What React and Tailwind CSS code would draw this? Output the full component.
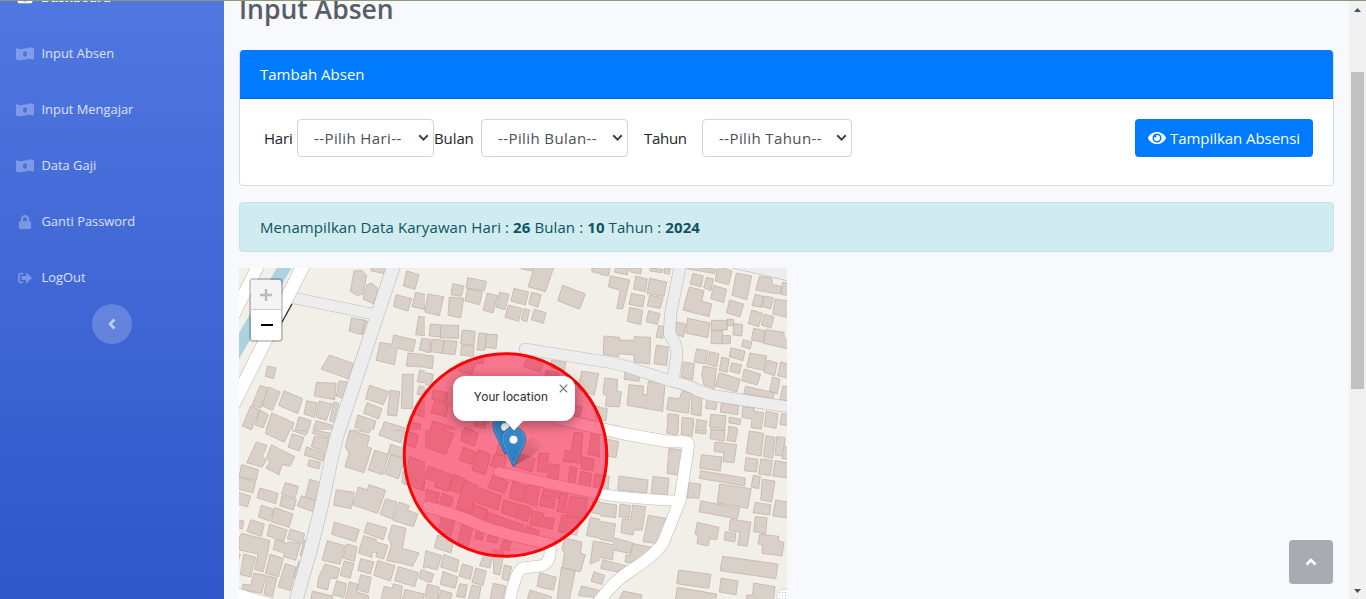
import React from "react";
import { FaLock, FaSignOutAlt, FaEye, FaTachometerAlt } from "react-icons/fa";

function MoneyWave({ className }) {
  return (
    <svg className={className} viewBox="0 0 18 18" fill="currentColor">
      <path
        fillRule="evenodd"
        d="M.8 3.300C3.500 4.600 6.200 4.300 9 3.500C11.800 2.700 14.500 2.200 17.300 3.100Q18 3.400 18 4.100V13.700Q18 14.600 17.200 14.400C14.500 13.400 11.800 13.700 9 14.500C6.200 15.300 3.500 15.700 .7 14.800Q0 14.600 0 13.900V3.900Q0 3 .8 3.300ZM9 6.300C7.800 6.300 7 7.500 7 9S7.800 11.700 9 11.700S11 10.500 11 9S10.200 6.300 9 6.300Z"
      />
    </svg>
  );
}

const navItems = [
  { label: "Input Absen", Icon: MoneyWave, icon: "size-[18px] text-white/30" },
  { label: "Input Mengajar", Icon: MoneyWave, icon: "size-[18px] text-white/30" },
  { label: "Data Gaji", Icon: MoneyWave, icon: "size-[18px] text-white/30" },
  { label: "Ganti Password", Icon: FaLock, icon: "size-[14px] text-white/30" },
  { label: "LogOut", Icon: FaSignOutAlt, icon: "size-[14px] text-white/30" },
];

/* Building footprints, one block per map tile; each tile uses its own 3x units. */
const tiles = [
  {
    x: 0, y: -2, w: 558, h: 492,
    shapes: [
      "345,15 368,13 383,28 372,84 355,89 334,76", "383,57 397,51 416,67 404,114 372,99",
      "398,0 446,0 440,24 395,14", "503,15 540,26 528,70 493,60", "472,86 518,98 507,135 463,121",
      "530,79 565,86 555,130 519,122", "562,86 580,90 575,140 556,134",
      "338,155 379,163 367,206 330,195", "377,164 388,167 379,205 370,205",
      "539,151 566,155 558,209 530,206", "464,207 530,222 522,257 475,247 466,296 411,283 423,229 458,235",
      "548,217 580,222 578,260 541,252", "507,261 580,268 580,305 502,300",
      "272,267 344,293 330,339 246,309", "86,300 111,306 104,338 79,331",
      "232,349 292,352 287,401 226,390", "300,345 325,348 312,397 292,390",
      "490,325 523,325 521,428 487,427", "542,312 580,320 580,355 535,347",
      "540,360 570,366 562,390 534,385", "392,358 449,377 433,416 379,398",
      "453,373 482,377 473,450 445,447", "384,410 429,428 418,459 374,442",
      "64,358 90,367 65,427 39,417", "88,363 124,378 100,433 70,420",
      "135,374 191,398 176,443 119,418", "203,404 235,411 226,454 195,444",
      "241,405 279,414 262,463 231,453", "284,408 300,412 283,468 272,465",
      "35,420 62,432 37,491 10,480", "62,432 88,446 72,486 49,477",
      "98,441 165,470 149,520 78,500", "180,452 217,464 203,507 168,493",
      "231,464 281,478 277,510 220,498", "357,447 411,465 400,501 347,484",
      "436,467 497,485 488,525 421,508", "342,491 390,500 385,520 335,510",
      "548,402 570,410 560,455 527,444", "520,470 545,475 540,510 510,500",
    ],
  },
  {
    x: 186, y: -2, w: 525, h: 492,
    shapes: [
      "330,0 386,6 361,77 309,62", "290,0 325,6 322,15 288,9", "500,6 558,8 552,28 501,17",
      "559,32 580,36 575,68 552,60", "413,58 481,84 464,130 398,104",
      "128,35 184,46 178,74 123,66", "83,53 117,60 109,91 78,86",
      "8,84 56,92 43,149 1,139", "73,93 116,97 107,155 69,148", "128,68 172,77 164,116 120,105",
      "187,81 218,89 204,141 174,133", "224,79 252,85 240,131 214,124",
      "267,67 311,78 301,117 258,105", "320,79 349,86 339,123 311,114",
      "250,117 291,128 281,166 240,154", "297,128 314,132 305,167 289,161", "328,130 363,140 355,172 319,161",
      "16,174 48,177 47,213 12,209", "47,177 101,178 101,217 46,216",
      "-10,218 18,220 15,260 -15,255", "22,220 58,223 52,262 16,257", "58,223 96,226 90,266 52,262",
      "112,192 151,196 147,238 107,234", "110,238 147,240 145,272 106,267",
      "162,201 184,202 180,252 156,253", "184,204 217,206 213,248 181,244",
      "-20,266 26,270 22,308 -20,302", "-20,315 25,325 18,360 -25,350",
      "538,210 575,213 573,270 534,267", "380,282 423,290 418,313 378,306",
      "470,315 521,323 508,388 459,370", "541,335 580,340 580,423 540,420 535,380",
      "110,285 153,292 140,325 100,315", "155,275 178,280 174,294 152,290",
      "308,275 355,293 345,318 294,300", "364,313 402,320 395,350 358,340",
      "24,372 69,380 65,408 20,400", "30,400 70,413 63,453 18,440",
      "25,465 88,485 70,530 5,510", "120,483 162,498 155,520 110,510",
      "435,415 471,422 464,452 430,445", "508,420 548,425 545,463 512,458",
      "156,440 188,448 180,487 147,480", "447,497 478,501 475,520 445,517",
    ],
  },
  {
    x: 361, y: -2, w: 570, h: 492,
    shapes: [
      "0,0 30,5 26,30 -4,24", "48,5 86,8 82,27 43,18", "88,4 125,8 122,24 92,18",
      "150,6 188,10 186,20 150,15", "193,6 211,8 208,25 192,22",
      "32,30 89,42 68,129 50,127 61,73 25,62", "107,30 142,39 136,77 101,69",
      "149,37 200,48 192,91 141,82", "94,82 134,90 128,123 87,115", "149,88 189,95 181,127 142,120",
      "89,124 128,133 122,176 82,166", "146,134 180,143 172,175 138,167",
      "176,178 192,182 188,217 168,213", "262,0 348,10 344,23 260,8",
      "279,22 310,30 303,63 270,53", "319,34 340,39 333,74 311,65",
      "354,0 396,15 386,56 345,45", "268,63 312,74 305,105 335,114 327,152 249,132",
      "341,58 380,70 371,110 332,98", "409,21 455,30 441,101 396,88", "389,102 431,114 420,153 379,140",
      "479,30 515,37 517,55 546,62 540,83 510,80 467,72", "548,49 575,53 575,90 543,85",
      "466,84 491,92 486,124 456,119", "493,90 520,95 512,129 486,121", "525,99 570,105 565,155 518,144",
      "455,132 487,142 476,182 445,172", "492,145 522,152 513,186 484,177",
      "263,157 330,171 323,215 257,201", "230,168 257,174 250,213 225,203",
      "334,163 382,163 382,192 334,193", "382,159 401,161 400,179 382,178", "401,172 428,176 425,210 399,207",
      "334,194 368,194 365,234 333,232", "368,208 392,209 391,233 365,233",
      "461,187 495,194 489,229 454,222", "498,191 552,199 553,218 575,225 575,251 490,232",
      "430,221 456,228 450,249 424,241", "12,210 59,214 58,222 103,223 103,212 152,214 149,294 102,288 102,267 57,263 56,272 10,265",
      "169,237 205,243 200,299 162,293", "290,248 324,255 316,294 282,288", "329,257 357,264 350,303 321,294",
      "393,245 435,256 429,284 388,272", "450,261 500,270 490,313 440,302",
      "365,273 388,279 381,319 358,313", "395,290 425,297 418,323 389,315",
      "502,282 532,291 524,329 492,319", "542,288 575,296 570,338 533,329",
      "250,288 283,293 278,341 244,332", "310,300 349,308 343,368 312,357 305,325",
      "358,320 421,340 410,378 346,360", "433,309 482,325 472,357 425,344",
      "517,333 540,339 532,384 509,376", "437,361 522,380 519,398 431,382", "549,359 575,365 575,410 540,400",
      "75,315 119,323 117,346 72,340", "14,336 53,340 51,376 64,378 58,423 16,420 20,391 9,383",
      "87,356 130,360 129,386 141,386 145,345 195,354 188,436 81,418",
      "206,394 238,398 246,376 272,380 265,442 200,431", "276,385 306,389 303,450 273,444",
      "320,402 352,407 347,431 317,427", "364,411 416,419 413,446 361,438",
      "428,422 463,427 462,436 491,440 484,489 453,485 456,460 426,454",
      "498,436 534,443 528,487 493,481", "545,443 575,449 573,482 540,475",
      "204,443 236,447 233,510 201,500", "247,454 281,458 278,515 243,510",
      "290,460 320,466 314,504 286,500", "332,445 378,449 375,487 329,483",
      "388,453 423,460 420,476 386,470", "-20,423 22,427 18,465 -25,455",
      "331,488 376,491 372,520 330,518", "386,480 412,486 410,520 382,515", "448,496 492,500 490,520 446,515",
    ],
  },
  {
    x: 0, y: 162, w: 558, h: 507,
    shapes: [
      "88,-10 153,0 136,37 79,10", "170,0 208,3 200,16 160,2", "160,12 195,22 181,63 147,51",
      "225,0 274,10 269,24 220,10", "226,18 269,27 262,65 217,50",
      "202,51 258,69 252,93 196,75", "210,89 245,97 240,117 206,108",
      "52,36 84,46 70,80 82,90 69,111 23,98", "97,44 167,80 153,109 129,104 120,134 81,115 93,95 82,85",
      "8,104 58,119 51,152 0,140", "0,141 50,156 42,188 -5,177", "0,188 35,198 25,231 -5,222",
      "63,174 117,190 110,221 54,203", "139,158 178,169 168,205 127,192", "129,197 172,209 163,240 122,227",
      "212,148 243,157 230,211 199,201", "187,197 230,212 223,245 175,228",
      "67,225 104,238 92,273 58,261", "107,232 162,252 150,292 97,275",
      "-5,270 14,273 10,297 -8,292", "35,269 76,282 67,319 24,304", "92,282 144,300 134,334 84,317",
      "154,297 197,311 189,340 145,326", "8,310 92,331 86,370 72,426 47,418 57,372 0,360 0,325",
      "110,329 144,340 147,335 184,341 170,391 133,380 136,370 102,358",
      "195,330 207,333 195,380 183,376", "14,372 50,382 35,441 4,434", "94,372 133,386 118,440 79,430",
      "139,401 172,412 154,482 117,470", "180,393 187,395 176,445 163,441",
      "45,429 80,436 68,490 8,478 12,463 35,465", "84,437 113,444 101,500 75,493", "-5,370 4,372 -3,400 -8,398",
      "332,0 392,18 384,50 398,55 375,128 318,110 330,70 319,50",
      "350,-8 395,0 391,9 345,0", "426,-4 497,3 485,39 420,15",
      "407,60 449,74 431,134 388,120", "455,75 498,87 478,147 437,131", "455,43 500,58 490,82 447,70",
      "490,125 510,130 500,166 489,158", "292,179 346,187 337,236 284,226",
      "390,164 440,181 416,250 342,225 358,171 385,180", "440,206 474,216 460,267 423,253",
      "480,216 512,228 505,240 537,252 523,290 462,271",
      "286,276 361,299 350,335 278,313", "385,277 443,294 433,329 375,308",
      "459,285 501,295 490,355 540,369 521,409 484,399 443,392 457,345 448,323",
      "374,317 412,328 411,336 447,346 434,387 411,380 413,367 399,367 399,382 358,369",
      "265,332 317,347 303,403 249,390", "322,342 354,350 346,394 312,384",
      "316,393 345,400 333,445 303,436", "365,386 405,396 394,432 357,421",
      "416,392 468,407 454,453 404,436", "258,402 302,415 294,446 273,444 266,480 234,471 240,439",
      "478,410 539,428 527,470 467,452", "547,419 580,427 575,457 540,445",
      "365,434 397,442 387,489 355,479", "293,452 322,461 315,503 281,494",
      "331,456 356,463 352,485 388,497 390,515 318,515", "220,483 281,498 278,520 215,510",
      "435,469 460,475 463,461 490,469 484,515 426,510", "498,478 556,492 552,520 488,515",
      "503,3 538,14 528,54 500,44", "512,78 574,105 550,182 498,160", "560,147 580,154 575,185 550,178",
      "560,365 580,370 578,420 553,413",
    ],
  },
  {
    x: 186, y: 162, w: 525, h: 507,
    shapes: [
      "0,-12 88,10 62,74 -8,48", "115,-8 160,10 148,49 107,32", "115,50 153,68 142,104 103,90",
      "160,59 197,73 181,134 141,120", "208,72 246,82 236,118 196,107", "220,42 245,52 240,80 214,70",
      "270,67 331,86 320,126 264,108", "342,69 371,70 365,127 336,123",
      "448,7 474,9 469,62 470,100 415,94 422,60 438,64", "500,2 533,5 525,80 489,73",
      "474,81 507,88 503,122 468,116", "374,101 403,105 399,150 367,145",
      "435,109 455,114 449,163 429,158", "468,124 500,131 495,175 461,171", "510,132 550,138 549,180 505,175",
      "10,109 38,118 26,153 -5,145", "43,120 84,136 70,184 28,170", "87,133 120,148 104,190 72,179",
      "120,150 160,168 137,251 94,235", "204,135 250,155 238,189 189,173",
      "5,178 43,190 35,222 -5,210", "53,190 85,204 78,228 43,218", "165,174 229,198 219,240 152,217",
      "263,155 303,168 291,216 252,203", "307,160 344,170 334,229 297,216",
      "355,178 403,189 402,205 352,195", "350,195 390,210 386,235 345,227",
      "407,188 428,193 419,249 395,244", "436,197 488,206 480,268 423,258",
      "236,210 280,224 270,262 229,248", "284,223 318,233 307,275 273,264",
      "146,222 188,240 179,270 140,257", "188,247 244,267 238,296 180,279",
      "320,242 356,250 356,262 389,266 382,297 352,291 315,285",
      "249,269 295,284 290,306 245,296", "305,288 342,302 337,320 295,307",
      "410,255 465,265 455,316 400,305", "50,260 90,270 78,316 38,306", "110,285 143,293 130,348 98,338",
      "155,299 175,304 172,330 150,326", "190,316 218,323 215,340 187,334", "235,330 258,336 252,363 226,357",
      "38,316 85,330 78,369 28,353", "2,362 50,377 37,420 -8,408", "56,373 102,391 95,426 47,411",
      "176,375 202,380 195,414 164,407", "205,358 237,366 225,435 206,431", "238,405 260,410 250,454 231,446",
      "112,401 144,412 136,448 102,438", "152,414 184,423 174,467 141,457",
      "54,424 99,441 90,475 46,463", "-10,420 27,432 18,457 -10,452", "8,462 43,472 37,515 -5,515",
      "48,480 81,490 75,515 38,515", "104,461 127,465 120,503 94,500", "141,465 168,470 160,515 128,515",
      "205,460 242,468 232,515 194,515", "344,428 394,442 385,481 336,469", "315,480 380,500 375,520 305,515",
      "419,324 471,336 467,370 481,374 466,426 412,414 418,370 411,355",
      "409,412 451,422 432,515 395,515", "496,262 570,278 568,335 484,316", "505,333 570,345 565,408 525,390 495,402",
      "507,425 541,438 532,463 498,454", "470,468 527,482 522,503 460,497", "503,213 580,220 580,263 500,248",
    ],
  },
  {
    x: 361, y: 162, w: 570, h: 507,
    shapes: [
      "200,-10 236,0 230,15 200,10", "247,-8 278,0 276,20 243,12", "288,0 320,0 316,12 285,8",
      "333,0 375,2 372,34 330,26", "389,-8 413,0 406,36 380,31",
      "345,36 410,44 402,98 369,95 372,68 342,64", "304,74 366,81 361,123 299,115",
      "448,3 491,10 483,78 438,70", "498,17 525,22 518,85 490,80", "530,20 555,23 550,79 525,75", "551,50 575,52 575,90 546,86",
      "438,83 474,88 469,126 433,122", "482,87 517,91 511,137 476,132", "525,92 575,100 575,145 518,138",
      "302,122 436,144 434,168 298,145", "460,136 481,140 476,176 453,171",
      "487,148 525,153 515,216 482,210", "359,162 454,176 443,235 352,219",
      "303,212 419,236 412,267 297,245", "466,217 512,224 509,255 459,248", "527,210 575,218 575,265 518,258",
      "466,260 501,263 497,312 461,305", "391,268 453,276 442,349 413,345 420,307 387,301",
      "292,277 357,292 350,329 330,326 324,348 291,341 294,318 285,312",
      "376,305 408,310 404,336 372,330", "479,313 536,319 536,333 552,337 546,378 486,370 487,345 474,342",
      "368,379 534,402 527,446 360,422", "236,420 333,433 326,475 230,461",
      "363,444 414,453 408,494 358,486", "232,472 350,492 345,520 225,515",
      "461,459 525,470 520,515 438,515 440,495 458,495",
      "20,27 56,35 48,83 15,77", "207,55 248,60 235,135 201,130", "57,138 144,150 140,189 53,180",
      "159,139 207,145 202,196 154,190", "267,158 302,162 297,205 262,203", "0,134 28,138 24,180 -15,176",
      "-10,216 50,225 47,263 -10,256", "60,222 91,227 87,265 57,260",
      "98,225 137,230 127,300 103,300 99,315 63,308 67,267 92,270",
      "-5,273 47,282 38,335 -10,326", "145,256 198,265 180,342 129,335",
      "45,324 98,339 91,371 40,360 38,390 -10,380 -10,333 40,345",
      "100,341 156,352 125,397 75,397 78,374 90,378",
      "8,389 89,410 77,430 2,416", "-8,430 14,435 6,463 -10,460", "70,483 126,495 120,520 52,515",
    ],
  },
];

const greyRoads = [
  { d: "M156 -6 L98 168 Q92 190 88 212 L82 240 L72 280 L55 340", w: 13 },
  { d: "M57 30.5 L134 46", w: 10.5 },
  { d: "M286 81 L361 93 Q380 95 398 102 L432 113 Q450 117 458 122 L471 127 L556 140", w: 11 },
  { d: "M442 -6 L431.500 46 L430.500 66 Q438 76 438 86 L434 112", w: 11.500 },
  { d: "M474 -12 L556 7", w: 14 },
];

const whiteRoads = [
  { d: "M21 -6 L-6 48", w: 12 },
  { d: "M66 -6 L-6 137", w: 13 },
  { d: "M260 204 Q310 216 356 225 Q380 230 441 233", w: 10 },
  { d: "M320 151 L381 165 L425 173 L447 174 Q450 175 449 180 L441 232 L424 275 Q415 288 391 303 Q374 314 358 336", w: 11.500 },
  { d: "M189 239 Q220 247 245 259 Q265 266 311 276 Q313 296 301 298 L284 300 Q277 301 270 336", w: 11 },
  { d: "M-6 322 L46 338", w: 6 },
];

function Roads({ roads, fill, casing }) {
  return (
    <g fill="none" strokeLinecap="round" strokeLinejoin="round">
      {roads.map((r) => (
        <path key={r.d} d={r.d} stroke={casing} strokeWidth={r.w + 1.2} />
      ))}
      {roads.map((r) => (
        <path key={r.d} d={r.d} stroke={fill} strokeWidth={r.w} />
      ))}
    </g>
  );
}

function Pin({ x, y }) {
  return (
    <g transform={`translate(${x} ${y})`}>
      <path
        d="M12.500 .5C5.800 .5 .5 5.700 .5 12.200C.5 16.500 2.800 20.300 5 24.800L12.500 40.500L20 24.800C22.200 20.300 24.500 16.500 24.500 12.200C24.500 5.700 19.200 .5 12.500 .5Z"
        fill="url(#pinFill)"
        stroke="#2e73a8"
        strokeWidth=".9"
      />
      <path
        d="M12.500 1.700C6.500 1.700 1.700 6.400 1.700 12.200C1.700 16 4.200 20 6.200 24.500L12.500 37.500L18.800 24.500C20.800 20 23.300 16 23.300 12.200C23.300 6.400 18.500 1.700 12.500 1.700Z"
        fill="none"
        stroke="#fff"
        strokeOpacity=".15"
      />
      <circle cx="12.500" cy="13" r="4.400" fill="#fff" stroke="#2e6c97" strokeWidth=".6" />
    </g>
  );
}

function MapView() {
  return (
    <div className="relative h-[331px] w-[548px] overflow-hidden bg-[#f2efe9]">
      <svg width="548" height="331" viewBox="0 0 548 331" className="block">
        <defs>
          <linearGradient id="pinFill" x1="0" y1="0" x2="0" y2="1">
            <stop offset="0" stopColor="#3a8fd0" />
            <stop offset="1" stopColor="#2b78bc" />
          </linearGradient>
          <linearGradient id="shade" x1="0" y1="1" x2="1" y2="0">
            <stop offset="0" stopColor="#000" stopOpacity=".45" />
            <stop offset="1" stopColor="#000" stopOpacity="0" />
          </linearGradient>
          <pattern id="dots" width="3" height="3" patternUnits="userSpaceOnUse">
            <rect width="3" height="3" fill="#fff" />
            <rect width="1" height="1" fill="#c4c4c4" />
          </pattern>
        </defs>
        <path d="M39 -2 L54 -2 L43 16 L0 91 V65 Z" fill="#aad3df" />
        {tiles.map((t) => (
          <svg
            key={`${t.x}-${t.y}`}
            x={t.x}
            y={t.y}
            width={t.w / 3}
            height={t.h / 3}
            viewBox={`0 0 ${t.w} ${t.h}`}
          >
            {t.shapes.map((p) => (
              <polygon key={p} points={p} fill="#d9d0c9" stroke="#c3b5aa" strokeWidth="2.400" />
            ))}
          </svg>
        ))}
        <Roads roads={greyRoads} fill="#ededee" casing="#bcbcbe" />
        <Roads roads={whiteRoads} fill="#ffffff" casing="#c2beb8" />
        <path d="M0 325 L34 335 H0 Z" fill="#fff" />
        <path d="M53 36 L43 54" stroke="#222" strokeWidth="1.200" />
        <circle cx="545" cy="328" r="7" fill="url(#dots)" stroke="#c4c4c4" strokeWidth=".6" />
        <circle cx="266.500" cy="187" r="101.300" fill="#ff0033" fillOpacity=".5" stroke="#f80606" strokeWidth="3" />
        <path d="M275 198 L282 177 Q292 165 302 172 Q305 180 294 187 Z" fill="url(#shade)" opacity=".6" />
        <Pin x={253.500} y={146} />
        <Pin x={262} y={158.700} />
      </svg>

      <div className="absolute left-[10px] top-[10px] flex w-[34px] flex-col rounded border-2 border-black/20 bg-white bg-clip-padding">
        <button className="flex h-[30px] items-center justify-center rounded-t-sm border-b border-[#ccc] bg-[#f4f4f4] text-[#bbb]">
          <svg width="14" height="14" viewBox="0 0 14 14" stroke="currentColor" strokeWidth="2.400">
            <path d="M1 7H13M7 1V13" />
          </svg>
        </button>
        <button className="flex h-[30px] items-center justify-center pl-px text-black">
          <svg width="14" height="14" viewBox="0 0 14 14" stroke="currentColor" strokeWidth="2">
            <path d="M1 7H13" />
          </svg>
        </button>
      </div>

      <div className="absolute left-[214px] top-[108px] h-[45px] w-[122px] rounded-xl bg-white shadow-[0_3px_14px_rgba(0,0,0,0.4)]">
        <div className="flex h-full items-center justify-center pr-[6px] font-['Roboto','Liberation_Sans',sans-serif] text-[12.5px] leading-none tracking-[0.05px] text-[#333]">
          <span className="pb-[2px]">Your location</span>
        </div>
        <svg className="absolute right-[7px] top-[8px]" width="9" height="9" viewBox="0 0 9 9" stroke="#757575" strokeWidth="1.200">
          <path d="M.7 .7L8.300 8.300M8.300 .7L.7 8.300" />
        </svg>
        <svg className="absolute left-[51px] top-[44px]" width="20" height="11" viewBox="0 0 20 11">
          <path d="M0 0H20L10 10.500Z" fill="#fff" />
        </svg>
      </div>
    </div>
  );
}

function Select({ text, className }) {
  return (
    <div className={`flex h-[38px] items-center justify-between rounded border border-[#ced4da] bg-white pl-4 pr-[4px] text-[#495057] ${className}`}>
      <span className="whitespace-nowrap tracking-[0.4px]">{text}</span>
      <svg width="11" height="8" viewBox="0 0 11 8" fill="none" stroke="#3f444a" strokeWidth="2">
        <path d="M1.200 1.300L5.500 5.600L9.800 1.300" />
      </svg>
    </div>
  );
}

export default function App() {
  return (
    <div className="relative flex h-[599px] w-[1366px] overflow-hidden bg-[#f8f9fc] font-['Open_Sans','Noto_Sans',sans-serif] text-[15px]">
      <div className="absolute inset-x-0 top-0 z-10 h-px bg-[#879b7c]" />

      <aside className="flex w-[224px] shrink-0 flex-col bg-linear-to-b from-[#5076e0] to-[#2f57c9]">
        <div className="flex h-[26px] items-start">
          <div className="-mt-[11px] flex h-4 items-center gap-2 pl-[17px] text-[13px] font-bold leading-none text-white">
            <FaTachometerAlt className="size-4" />
            <span className="tracking-[-0.1px]">Dashboard</span>
          </div>
        </div>
        <nav className="flex flex-col">
          {navItems.map(({ label, Icon, icon }) => (
            <a key={label} className="flex h-14 items-center pl-4 text-[12.9px] text-white/80">
              <span className="mr-[7.500px] flex w-[18px] justify-center">
                <Icon className={icon} />
              </span>
              <span>{label}</span>
            </a>
          ))}
        </nav>
        <button className="-mt-[2px] flex size-10 items-center justify-center self-center rounded-full bg-white/20 text-white/60">
          <svg width="8" height="12" viewBox="0 0 8 12" fill="none" stroke="currentColor" strokeWidth="2.600" strokeLinejoin="round">
            <path d="M6.500 1.500L2 6L6.500 10.500" />
          </svg>
        </button>
      </aside>

      <main className="flex min-w-0 flex-1 flex-col pl-[15px] pr-[15px]">
        <h1 className="-mt-[10px] h-[60px] text-[26.500px] font-semibold leading-[38px] text-[#5a5c69]">Input Absen</h1>

        <section className="h-[136px] shrink-0 rounded border border-[#d9dbe0] bg-white">
          <header className="-mt-px flex h-[49px] items-center rounded-t border-b border-[#0a65c9] bg-[#007bff] pl-5 text-white">Tambah Absen</header>
          <div className="flex items-center pl-6 pr-5 pt-5 text-[#212529]">
            <span className="w-[33px] tracking-[-0.2px]">Hari</span>
            <Select text="--Pilih Hari--" className="w-[137px]" />
            <span className="w-[47px] tracking-[-0.1px]">Bulan</span>
            <Select text="--Pilih Bulan--" className="w-[147px]" />
            <span className="ml-4 w-[58px] tracking-[-0.3px]">Tahun</span>
            <Select text="--Pilih Tahun--" className="w-[150px]" />
            <button className="ml-auto flex h-[38px] w-[178px] items-center justify-center gap-1 whitespace-nowrap rounded bg-[#007bff] text-white">
              <FaEye className="size-[18px]" />
              <span className="tracking-[-0.05px]">Tampilkan Absensi</span>
            </button>
          </div>
        </section>

        <div className="mt-4 flex h-[50px] shrink-0 items-center rounded border border-[#bee5eb] bg-[#d1ecf1] pl-5 text-[#0c5460]">
          <p className="tracking-[0.1px]">
            Menampilkan Data Karyawan Hari : <b>26</b> Bulan : <b>10</b> Tahun : <b>2024</b>
          </p>
        </div>

        <div className="mt-4">
          <MapView />
        </div>
      </main>

      <div className="flex w-[17px] shrink-0 flex-col items-center bg-[#f1f1f1]">
        <svg width="17" height="72" viewBox="0 0 17 72">
          <path d="M5 12L8.500 8L12 12Z" fill="#505050" />
        </svg>
        <div className="h-[317px] w-[13px] bg-[#c1c1c1]" />
        <svg className="mt-auto" width="17" height="17" viewBox="0 0 17 17">
          <path d="M5 7L8.500 11L12 7Z" fill="#505050" />
        </svg>
      </div>

      <button className="absolute bottom-[15px] right-[33px] flex size-11 items-center justify-center rounded bg-[#a9aab2] text-white">
        <svg width="12" height="8" viewBox="0 0 12 8" fill="none" stroke="currentColor" strokeWidth="2.600" strokeLinejoin="round">
          <path d="M1.500 6.500L6 2L10.500 6.500" />
        </svg>
      </button>
    </div>
  );
}
